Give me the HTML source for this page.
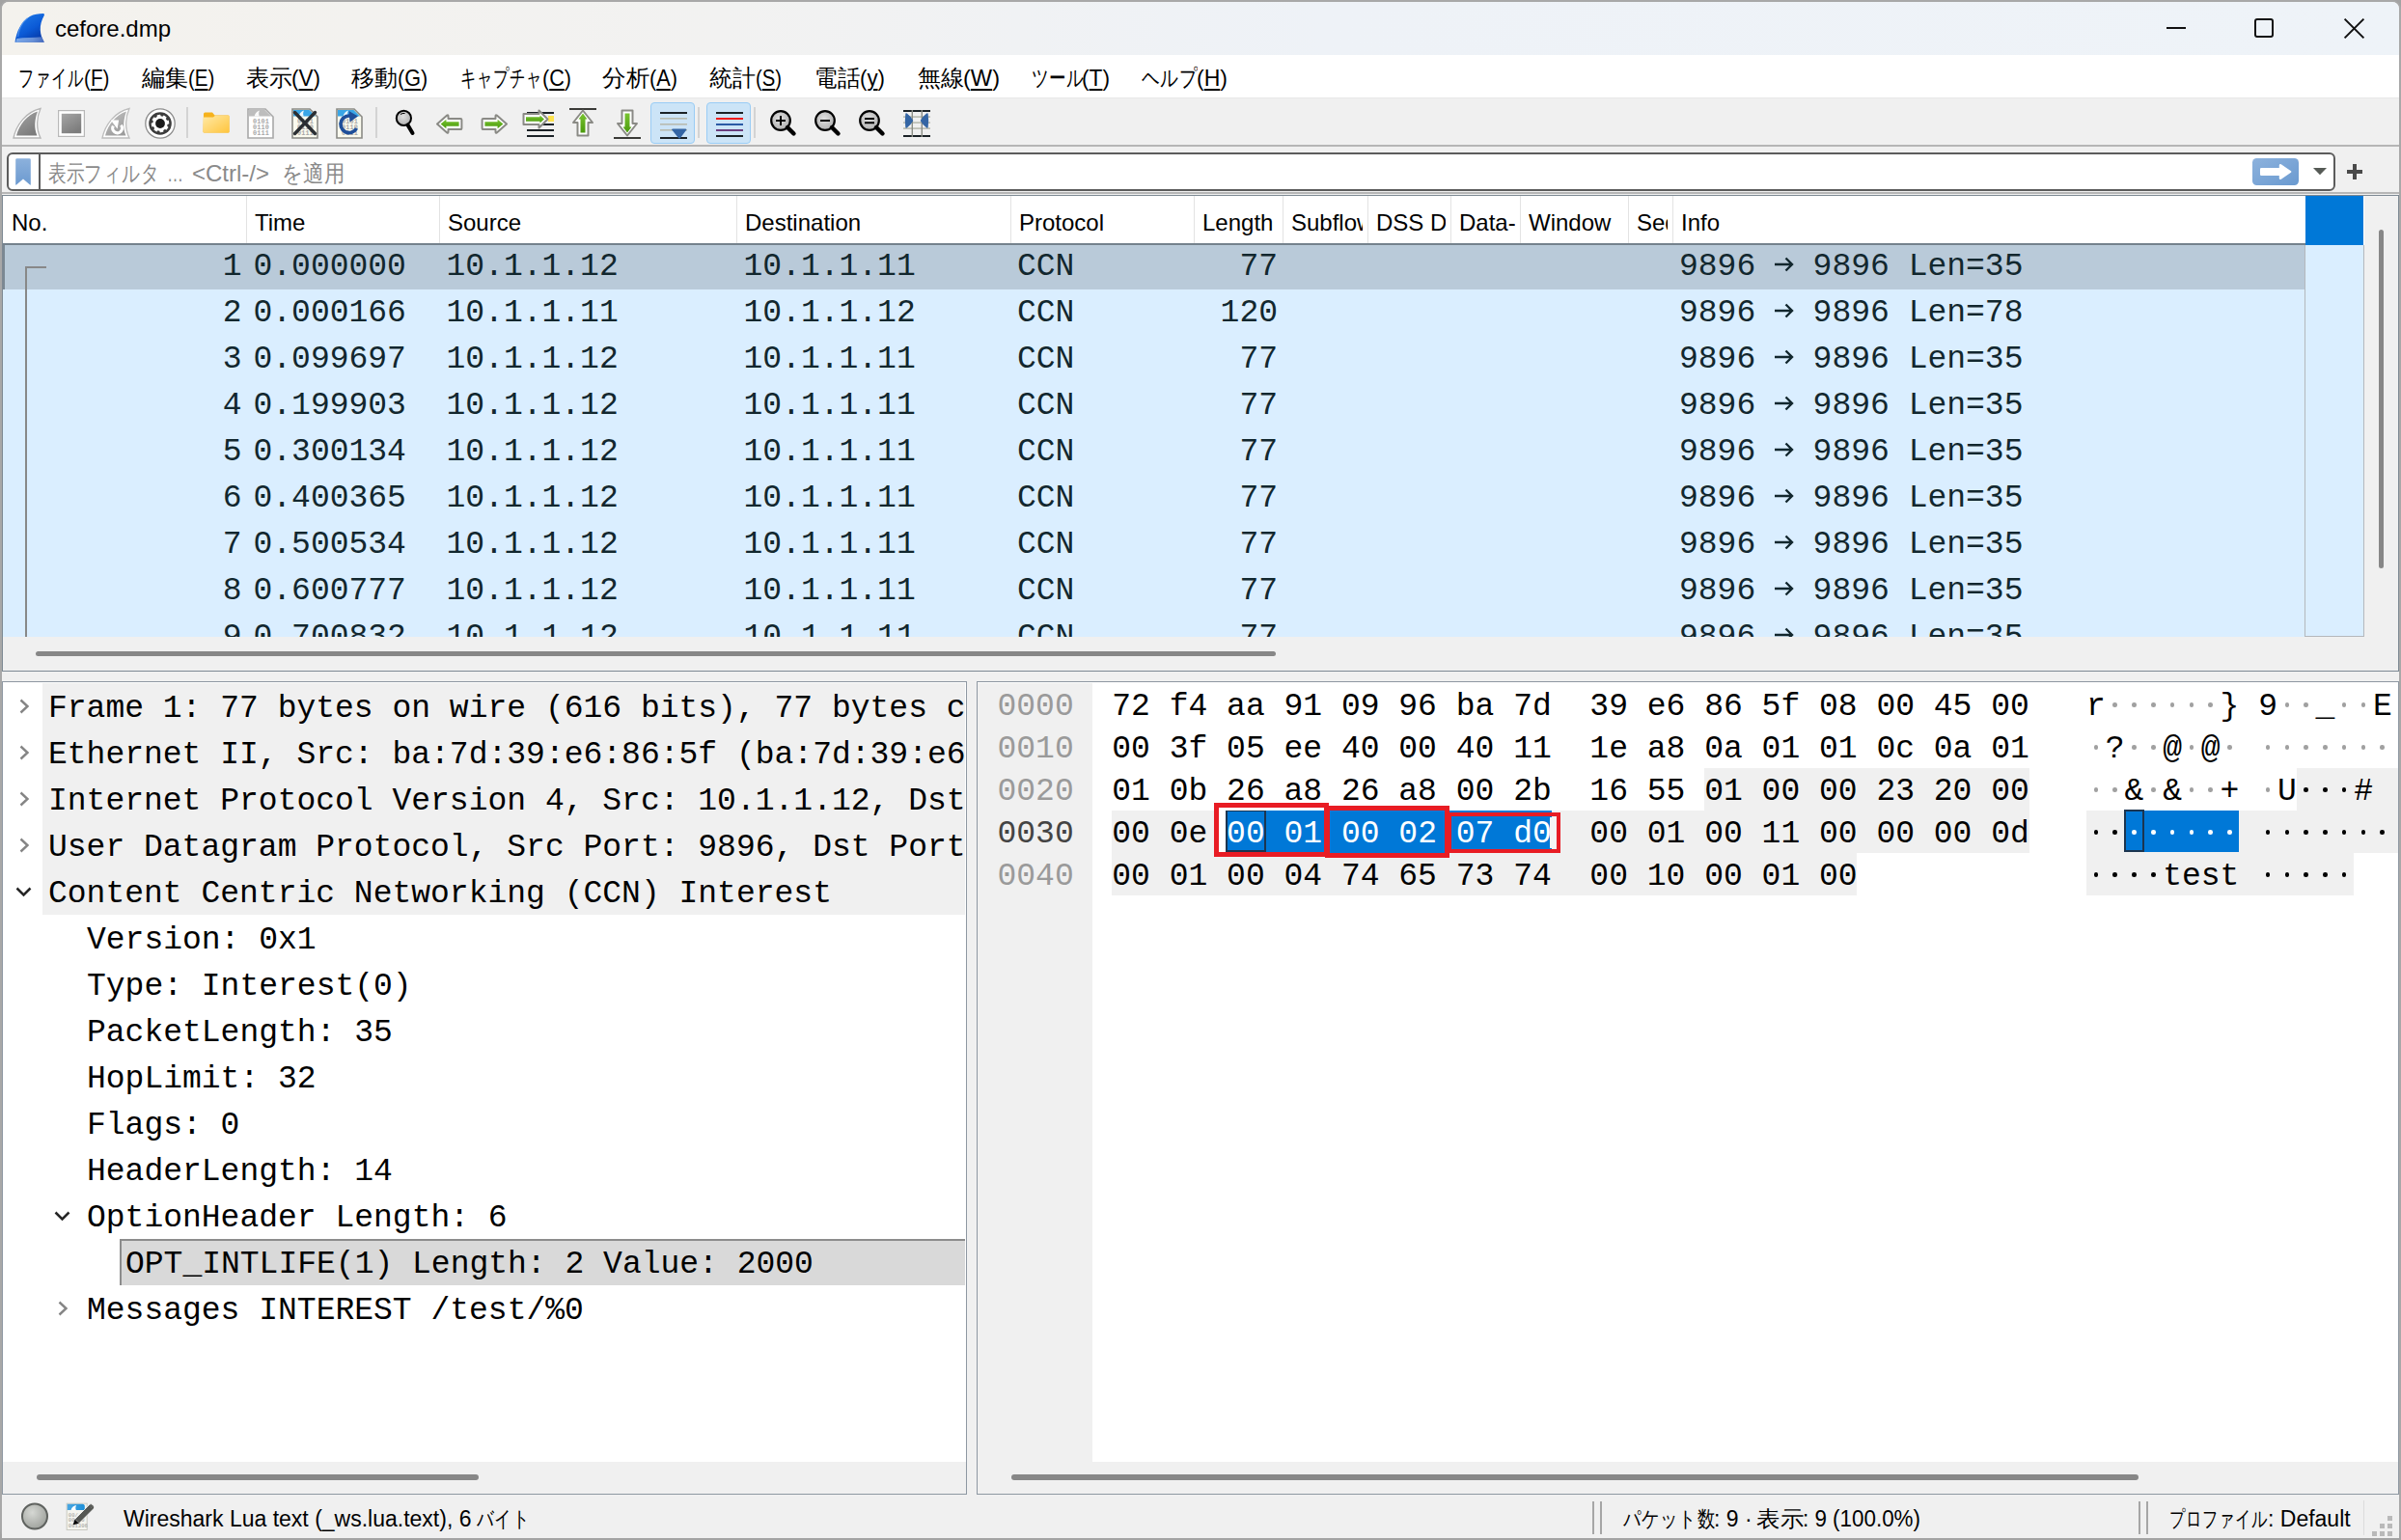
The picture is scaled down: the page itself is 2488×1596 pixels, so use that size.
<!DOCTYPE html><html><head><meta charset="utf-8"><title>cefore.dmp</title><style>
*{margin:0;padding:0;box-sizing:border-box}
html,body{width:2488px;height:1596px;overflow:hidden;background:#a0a0a0;position:relative}
.t{position:absolute;white-space:pre;line-height:1;transform-origin:0 0}
.s24{font-family:"Liberation Sans", sans-serif;font-size:24px;color:#000}
.s23{font-family:"Liberation Sans", sans-serif;font-size:23px;color:#000}
.m{font-family:"Liberation Mono", monospace;font-size:33px;color:#000}
u{text-decoration:underline;text-underline-offset:3px;text-decoration-thickness:1.5px}
svg{position:absolute;overflow:visible}
.clip{position:absolute;overflow:hidden}
</style></head><body><div style="position:absolute;left:0px;top:0px;width:2488px;height:1596px;background:#a3a3a3"></div>
<div style="position:absolute;left:0px;top:0px;width:2488px;height:1594px;background:#f0f0f0;border:2px solid #a8a8a8;border-radius:9px"></div>
<div style="position:absolute;left:2px;top:2px;width:2484px;height:55px;background:linear-gradient(90deg,#f4f2ed 0%,#f2f2f1 30%,#eef2f7 55%,#eef3f8 100%);border-radius:7px 7px 0 0"></div>
<svg style="left:0px;top:0px" width="60" height="60" viewBox="0 0 60 60"><defs><linearGradient id="fin" x1="0.2" y1="0" x2="0.8" y2="1"><stop offset="0" stop-color="#1f7ae8"/><stop offset="0.55" stop-color="#0b5ad6"/><stop offset="1" stop-color="#0434a0"/></linearGradient>
<linearGradient id="wat" x1="0" y1="0" x2="1" y2="0"><stop offset="0" stop-color="#8db6ee"/><stop offset="0.6" stop-color="#7aa0de"/><stop offset="1" stop-color="#4f74c4"/></linearGradient></defs>
<path d="M15.5 43.7 C17 33 22 22 31 17 C35 14.8 40 14 45 14 Q46.6 14.3 45.8 16 C43 21 41.6 26 41.8 31 C42 36 43.5 40 45.8 43.7 Z" fill="url(#fin)"/>
<path d="M18.6 38 C19.6 30 23 23 28.5 18.8" stroke="#5d9cf0" stroke-width="1.1" fill="none" opacity="0.75"/>
<path d="M16.2 43.7 C16.5 42 16.9 40.8 17.3 40 C25 38.6 35 38.9 43.4 38.2 C44.2 40 45 42 45.8 43.7 Z" fill="url(#wat)" opacity="0.85"/></svg>
<div class="t s24" style="left:57px;top:18px;">cefore.dmp</div>
<div style="position:absolute;left:2245px;top:28px;width:20px;height:2px;background:#111"></div>
<div style="position:absolute;left:2336px;top:19px;width:20px;height:20px;border:2px solid #111;border-radius:3px"></div>
<svg style="left:2429px;top:19px" width="21" height="21" viewBox="0 0 21 21"><path d="M0.6 0.6 L20.4 20.4 M20.4 0.6 L0.6 20.4" stroke="#111" stroke-width="2"/></svg>
<div style="position:absolute;left:2px;top:57px;width:2484px;height:44px;background:#ffffff"></div>
<div style="position:absolute;left:2px;top:101px;width:2484px;height:1px;background:#e8e8e8"></div>
<div class="t s24 fit" style="left:19.3px;top:69px;;--tw:67.6;">ファイル</div>
<div class="t s24 fit" style="left:86.8px;top:69px;;--tw:26.4;">(<u>F</u>)</div>
<div class="t s24 fit" style="left:146.7px;top:69px;;--tw:48;">編集</div>
<div class="t s24 fit" style="left:194.5px;top:69px;;--tw:27.4;">(<u>E</u>)</div>
<div class="t s24 fit" style="left:254.5px;top:69px;;--tw:48;">表示</div>
<div class="t s24 fit" style="left:301.5px;top:69px;;--tw:30.0;">(<u>V</u>)</div>
<div class="t s24 fit" style="left:364.1px;top:69px;;--tw:48;">移動</div>
<div class="t s24 fit" style="left:411.8px;top:69px;;--tw:31.2;">(<u>G</u>)</div>
<div class="t s24 fit" style="left:477px;top:69px;;--tw:85;">キャプチャ</div>
<div class="t s24 fit" style="left:562px;top:69px;;--tw:30;">(<u>C</u>)</div>
<div class="t s24 fit" style="left:624px;top:69px;;--tw:49;">分析</div>
<div class="t s24 fit" style="left:673px;top:69px;;--tw:29;">(<u>A</u>)</div>
<div class="t s24 fit" style="left:735px;top:69px;;--tw:48;">統計</div>
<div class="t s24 fit" style="left:783px;top:69px;;--tw:27;">(<u>S</u>)</div>
<div class="t s24 fit" style="left:844px;top:69px;;--tw:47;">電話</div>
<div class="t s24 fit" style="left:891px;top:69px;;--tw:26;">(<u>y</u>)</div>
<div class="t s24 fit" style="left:951px;top:69px;;--tw:48;">無線</div>
<div class="t s24 fit" style="left:998px;top:69px;;--tw:38;">(<u>W</u>)</div>
<div class="t s24 fit" style="left:1068.6px;top:69px;;--tw:54;">ツール</div>
<div class="t s24 fit" style="left:1121px;top:69px;;--tw:29;">(<u>T</u>)</div>
<div class="t s24 fit" style="left:1183px;top:69px;;--tw:58;">ヘルプ</div>
<div class="t s24 fit" style="left:1240px;top:69px;;--tw:32;">(<u>H</u>)</div>
<div style="position:absolute;left:2px;top:102px;width:2484px;height:48px;background:#f0f0f0"></div>
<div style="position:absolute;left:2px;top:150px;width:2484px;height:2px;background:#b5b5b5"></div>
<svg width="0" height="0" style="position:absolute"><defs>
<linearGradient id="gfin" x1="0" y1="0" x2="0.6" y2="1"><stop offset="0" stop-color="#a6a6a6"/><stop offset="1" stop-color="#7c7c7c"/></linearGradient>
<linearGradient id="gfin2" x1="0" y1="0" x2="0.6" y2="1"><stop offset="0" stop-color="#c4c4c4"/><stop offset="1" stop-color="#9c9c9c"/></linearGradient>
<radialGradient id="lens" cx="0.45" cy="0.4" r="0.6"><stop offset="0" stop-color="#e0e0e0"/><stop offset="1" stop-color="#b0b0b0"/></radialGradient>
<linearGradient id="grn" x1="0" y1="0" x2="0" y2="1"><stop offset="0" stop-color="#79c431"/><stop offset="1" stop-color="#4a9a0c"/></linearGradient>
<linearGradient id="fold" x1="0" y1="0" x2="1" y2="1"><stop offset="0" stop-color="#ffe9a6"/><stop offset="1" stop-color="#ffc53d"/></linearGradient>
</defs></svg>
<svg style="left:12px;top:111px" width="32" height="34" viewBox="0 0 32 34"><path d="M2 32 C5 18 15 5 30 1.5 C26 10 25 22 30 32 Z" fill="#fff" stroke="#b5b5b5" stroke-width="1.3"/><path d="M5 29.5 C8 18 16 8 27 4.5 C24 12 23 22 26.5 29.5 Z" fill="url(#gfin)"/></svg>
<svg style="left:60px;top:114px" width="28" height="28" viewBox="0 0 28 28"><rect x="0.6" y="0.6" width="26.8" height="26.8" fill="#fff" stroke="#b8b8b8" stroke-width="1.2"/><rect x="3.8" y="3.8" width="20.4" height="20.4" fill="url(#gfin)"/></svg>
<svg style="left:104px;top:111px" width="32" height="34" viewBox="0 0 32 34"><path d="M2 32 C5 18 15 5 30 1.5 C26 10 25 22 30 32 Z" fill="#fff" stroke="#bdbdbd" stroke-width="1.3"/><path d="M5 29.5 C8 18 16 8 27 4.5 C24 12 23 22 26.5 29.5 Z" fill="url(#gfin2)"/><path d="M21.35 18.75 A4.9 4.9 0 1 1 13.36 19.45" fill="none" stroke="#fff" stroke-width="3.2"/><path d="M10.8 13.6 L19.1 13.6 L17.6 22.5 Z" fill="#fff"/></svg>
<svg style="left:150px;top:112px" width="32" height="32" viewBox="0 0 32 32"><circle cx="16" cy="16" r="15.2" fill="#fff" stroke="#8d8d8d" stroke-width="1.3"/><circle cx="16" cy="16" r="11.8" fill="#3c3c3c"/><circle cx="16" cy="16" r="7.7" fill="#fff"/><rect x="14.1" y="6.8" width="3.8" height="3" rx="0.6" fill="#fff" transform="rotate(-10 16 16)"/><rect x="14.1" y="6.8" width="3.8" height="3" rx="0.6" fill="#fff" transform="rotate(35 16 16)"/><rect x="14.1" y="6.8" width="3.8" height="3" rx="0.6" fill="#fff" transform="rotate(80 16 16)"/><rect x="14.1" y="6.8" width="3.8" height="3" rx="0.6" fill="#fff" transform="rotate(125 16 16)"/><rect x="14.1" y="6.8" width="3.8" height="3" rx="0.6" fill="#fff" transform="rotate(170 16 16)"/><rect x="14.1" y="6.8" width="3.8" height="3" rx="0.6" fill="#fff" transform="rotate(215 16 16)"/><rect x="14.1" y="6.8" width="3.8" height="3" rx="0.6" fill="#fff" transform="rotate(260 16 16)"/><rect x="14.1" y="6.8" width="3.8" height="3" rx="0.6" fill="#fff" transform="rotate(305 16 16)"/><circle cx="16" cy="16" r="4.9" fill="#1a1a1a"/></svg>
<div style="position:absolute;left:193px;top:111px;width:2px;height:32px;background:#d3d3d3"></div>
<svg style="left:210px;top:116px" width="28" height="22" viewBox="0 0 28 22"><path d="M1 2 Q1 0.5 2.5 0.5 L10 0.5 L12.5 3.5 L26.5 3.5 Q27.5 3.5 27.5 4.5 L27.5 20.5 Q27.5 21.5 26.5 21.5 L1.5 21.5 Q0.5 21.5 0.5 20.5 Z" fill="#f6b21c"/><path d="M0.5 6.5 Q0.5 5.5 1.5 5.5 L11 5.5 L13 3.8 L26.5 3.8 Q27.5 3.8 27.5 4.8 L27.5 20.5 Q27.5 21.5 26.5 21.5 L1.5 21.5 Q0.5 21.5 0.5 20.5 Z" fill="url(#fold)"/></svg>
<svg style="left:256px;top:112px" width="28" height="32" viewBox="0 0 28 32"><path d="M1 1 L19 1 L27 9 L27 31 L1 31 Z" fill="#fff" stroke="#a9a9a9" stroke-width="1.6"/><path d="M2 2 L18.5 2 L25 8.5 L2 8.5 Z" fill="#bdbdbd"/><path d="M7.5 8.5 C8.5 5.5 10.5 3.3 13 2.6 C12 4.8 11.8 6.5 12.8 8.5 Z" fill="#fff" opacity="0.9"/><g font-family="Liberation Mono" font-size="6.8" font-weight="bold" fill="#a8a8a8" letter-spacing="0.2"><text x="6" y="16.4">0101</text><text x="6" y="22.3">0110</text><text x="6" y="28.2">0111</text></g></svg>
<svg style="left:302px;top:112px" width="28" height="32" viewBox="0 0 28 32"><path d="M1 1 L19 1 L27 9 L27 31 L1 31 Z" fill="#fbfbef" stroke="#8a8a85" stroke-width="1.6"/><path d="M2 2 L18.5 2 L25 8.5 L2 8.5 Z" fill="#3aa6e6"/><path d="M7.5 8.5 C8.5 5.5 10.5 3.3 13 2.6 C12 4.8 11.8 6.5 12.8 8.5 Z" fill="#fff" opacity="0.9"/><g font-family="Liberation Mono" font-size="6.8" font-weight="bold" fill="#a8a8a8" letter-spacing="0.2"><text x="6" y="16.4">0101</text><text x="6" y="22.3">0110</text><text x="6" y="28.2">0111</text></g><path d="M3.5 4.5 L24.5 26.5 M24.5 4.5 L3.5 26.5" stroke="#2b2f33" stroke-width="3.4" stroke-linecap="round"/></svg>
<svg style="left:348px;top:112px" width="28" height="32" viewBox="0 0 28 32"><path d="M1 1 L19 1 L27 9 L27 31 L1 31 Z" fill="#fbfbef" stroke="#8a8a85" stroke-width="1.6"/><path d="M2 2 L18.5 2 L25 8.5 L2 8.5 Z" fill="#3aa6e6"/><path d="M7.5 8.5 C8.5 5.5 10.5 3.3 13 2.6 C12 4.8 11.8 6.5 12.8 8.5 Z" fill="#fff" opacity="0.9"/><g font-family="Liberation Mono" font-size="6.8" font-weight="bold" fill="#a8a8a8" letter-spacing="0.2"><text x="6" y="16.4">0101</text><text x="6" y="22.3">0110</text><text x="6" y="28.2">0111</text></g><path d="M21.5 21 A8.8 8.8 0 1 1 17.5 8.8" fill="none" stroke="#1f4f9a" stroke-width="3.6"/><path d="M13.5 3 L23 8.5 L14.5 14.5 Z" fill="#1f4f9a"/></svg>
<div style="position:absolute;left:389px;top:111px;width:2px;height:32px;background:#d3d3d3"></div>
<svg style="left:404px;top:112px" width="28" height="30" viewBox="0 0 28 30"><circle cx="14.4" cy="10.4" r="7.6" fill="url(#lens)" stroke="#000" stroke-width="2"/><path d="M11 6.5 Q13 5 15.5 5.5" stroke="#000" stroke-width="1" fill="none"/><path d="M18.5 17.5 L23.5 26" stroke="#000" stroke-width="4" stroke-linecap="round"/></svg>
<svg style="left:451px;top:117px" width="30" height="23" viewBox="0 0 30 23"><path d="M2 11.5 L12.2 2.6 Q13.5 1.6 13.5 3.4 L13.5 5.9 L26.2 5.9 Q27.4 5.9 27.4 7.1 L27.4 15.9 Q27.4 17.1 26.2 17.1 L13.5 17.1 L13.5 19.6 Q13.5 21.4 12.2 20.4 Z" fill="#fff" stroke="#8a8a85" stroke-width="2" stroke-linejoin="round"/><path d="M5.6 11.5 L11.4 6.8 L11.4 9.2 L24.6 9.2 L24.6 13.8 L11.4 13.8 L11.4 16.2 Z" fill="url(#grn)"/></svg>
<svg style="left:497px;top:117px" width="30" height="23" viewBox="0 0 30 23"><path d="M28 11.5 L17.8 2.6 Q16.5 1.6 16.5 3.4 L16.5 5.9 L3.8 5.9 Q2.6 5.9 2.6 7.1 L2.6 15.9 Q2.6 17.1 3.8 17.1 L16.5 17.1 L16.5 19.6 Q16.5 21.4 17.8 20.4 Z" fill="#fff" stroke="#8a8a85" stroke-width="2" stroke-linejoin="round"/><path d="M24.4 11.5 L18.6 6.8 L18.6 9.2 L5.4 9.2 L5.4 13.8 L18.6 13.8 L18.6 16.2 Z" fill="url(#grn)"/></svg>
<svg style="left:541px;top:113px" width="36" height="30" viewBox="0 0 36 30"><rect x="5" y="3" width="28" height="2" fill="#1b2226"/><rect x="27" y="7" width="6" height="6" fill="#fde34d"/><rect x="5" y="15" width="28" height="2" fill="#1b2226"/><rect x="5" y="21" width="28" height="2" fill="#1b2226"/><rect x="5" y="27" width="28" height="2" fill="#1b2226"/><path d="M26.5 10.5 L17.5 1.5 L17.5 5 L1.5 5 L1.5 16 L17.5 16 L17.5 19.5 Z" fill="#fff" stroke="#8a8a85" stroke-width="2" stroke-linejoin="round"/><path d="M23 10.5 L18.5 6.5 L18.5 8.2 L4 8.2 L4 12.8 L18.5 12.8 L18.5 14.5 Z" fill="url(#grn)"/></svg>
<svg style="left:589px;top:111px" width="30" height="34" viewBox="0 0 30 34"><rect x="1" y="1" width="28" height="2" fill="#3a3a37"/><path d="M15 3.5 L25 16 L20.5 16 L20.5 29.5 L9.5 29.5 L9.5 16 L5 16 Z" fill="#fff" stroke="#8a8a85" stroke-width="2" stroke-linejoin="round"/><path d="M15 6.5 L19.5 12.5 L17.5 12.5 L17.5 26.5 L12.5 26.5 L12.5 12.5 L10.5 12.5 Z" fill="url(#grn)"/></svg>
<svg style="left:635px;top:112px" width="30" height="34" viewBox="0 0 30 34"><rect x="1" y="30" width="28" height="2" fill="#3a3a37"/><path d="M15 28.5 L25 16 L20.5 16 L20.5 2.5 L9.5 2.5 L9.5 16 L5 16 Z" fill="#fff" stroke="#8a8a85" stroke-width="2" stroke-linejoin="round"/><path d="M15 25.5 L19.5 19.5 L17.5 19.5 L17.5 5.5 L12.5 5.5 L12.5 19.5 L10.5 19.5 Z" fill="url(#grn)"/></svg>
<div style="position:absolute;left:674px;top:106px;width:46px;height:43px;background:#cce4f7;border:1px solid #99ccf5;border-radius:4px"></div>
<svg style="left:684px;top:115px" width="28" height="30" viewBox="0 0 28 30"><rect x="0" y="1" width="28" height="2" fill="#1b2226"/><rect x="0" y="7" width="28" height="1.6" fill="#b8bbb0"/><rect x="0" y="13" width="28" height="1.6" fill="#b8bbb0"/><rect x="0" y="19" width="28" height="1.6" fill="#b8bbb0"/><rect x="0" y="27" width="28" height="2" fill="#1b2226"/><path d="M12 19.5 Q12 18.5 13.5 18.5 L26.5 18.5 Q28 18.5 27 20 L21 28 Q20 29 19 28 L13 20.5 Z" fill="#3465a4"/></svg>
<div style="position:absolute;left:723px;top:111px;width:2px;height:32px;background:#d3d3d3"></div>
<div style="position:absolute;left:732px;top:106px;width:46px;height:43px;background:#cce4f7;border:1px solid #99ccf5;border-radius:4px"></div>
<svg style="left:742px;top:115px" width="28" height="30" viewBox="0 0 28 30"><rect x="0" y="1" width="28" height="2" fill="#1b2226"/><rect x="0" y="7" width="28" height="2" fill="#ef1c1c"/><rect x="0" y="13" width="28" height="2" fill="#2a5aa5"/><rect x="0" y="19" width="28" height="2" fill="#6a3d7d"/><rect x="0" y="25" width="28" height="2" fill="#1b2226"/></svg>
<div style="position:absolute;left:781px;top:111px;width:2px;height:32px;background:#d3d3d3"></div>
<svg style="left:798px;top:114px" width="30" height="30" viewBox="0 0 30 30"><circle cx="11" cy="11" r="9.8" fill="url(#lens)" stroke="#000" stroke-width="2.2"/><path d="M18 18 L24.5 24.5" stroke="#000" stroke-width="4.4" stroke-linecap="round"/><path d="M6 11 L16 11 M11 6 L11 16" stroke="#000" stroke-width="2"/></svg>
<svg style="left:844px;top:114px" width="30" height="30" viewBox="0 0 30 30"><circle cx="11" cy="11" r="9.8" fill="url(#lens)" stroke="#000" stroke-width="2.2"/><path d="M18 18 L24.5 24.5" stroke="#000" stroke-width="4.4" stroke-linecap="round"/><path d="M6 11 L16 11" stroke="#000" stroke-width="2"/></svg>
<svg style="left:890px;top:114px" width="30" height="30" viewBox="0 0 30 30"><circle cx="11" cy="11" r="9.8" fill="url(#lens)" stroke="#000" stroke-width="2.2"/><path d="M18 18 L24.5 24.5" stroke="#000" stroke-width="4.4" stroke-linecap="round"/><path d="M6 9 L16 9 M6 13.2 L16 13.2" stroke="#000" stroke-width="1.9"/></svg>
<svg style="left:936px;top:113px" width="28" height="30" viewBox="0 0 28 30"><rect x="0" y="1" width="28" height="2" fill="#1b2226"/><rect x="0" y="7.3" width="28" height="1.6" fill="#b8bbb0"/><rect x="0" y="13.3" width="28" height="1.6" fill="#b8bbb0"/><rect x="0" y="19.3" width="28" height="1.6" fill="#b8bbb0"/><rect x="0" y="27" width="28" height="2" fill="#1b2226"/><rect x="8.6" y="1" width="1.4" height="28" fill="#8a8d86"/><rect x="18.6" y="1" width="1.4" height="28" fill="#8a8d86"/><path d="M2.3 5.2 Q2.4 3.6 3.8 4.5 Q8 7.6 10.3 12 Q8 16.4 3.8 19.5 Q2.4 20.4 2.3 18.8 Q1.4 12 2.3 5.2 Z" fill="#3465a4"/><path d="M25.7 5.2 Q25.6 3.6 24.2 4.5 Q20 7.6 17.7 12 Q20 16.4 24.2 19.5 Q25.6 20.4 25.7 18.8 Q26.6 12 25.7 5.2 Z" fill="#3465a4"/></svg>
<div style="position:absolute;left:2px;top:152px;width:2484px;height:47px;background:#f0f0f0"></div>
<div style="position:absolute;left:7px;top:158px;width:2413px;height:40px;background:#fff;border:2px solid #5c5c5c;border-radius:6px"></div>
<div style="position:absolute;left:40px;top:160px;width:2px;height:36px;background:#5c5c5c"></div>
<svg style="left:14px;top:162px" width="20" height="32" viewBox="0 0 20 32"><defs><linearGradient id="bm" x1="0" y1="0" x2="0" y2="1"><stop offset="0" stop-color="#8cb1dc"/><stop offset="1" stop-color="#6c9ad0"/></linearGradient></defs>
<path d="M2.2 3.5 Q2.2 2.2 3.6 2.2 L16.4 2.2 Q17.8 2.2 17.8 3.5 L17.8 29.2 Q17.8 30 17 29.4 L10 23.5 L3 29.4 Q2.2 30 2.2 29.2 Z" fill="url(#bm)"/></svg>
<div class="t s24 fit" style="left:50px;top:168px;color:#8a8a8a;--tw:115;">表示フィルタ</div>
<div class="t s24 fit" style="left:173px;top:168px;color:#8a8a8a;--tw:17;">…</div>
<div class="t s24" style="left:199px;top:168px;color:#8a8a8a">&lt;Ctrl-/&gt;</div>
<div class="t s24 fit" style="left:292px;top:168px;color:#8a8a8a;--tw:65;">を適用</div>
<svg style="left:2334px;top:164px" width="48" height="28" viewBox="0 0 48 28"><defs><linearGradient id="ap" x1="0" y1="0" x2="1" y2="1"><stop offset="0" stop-color="#8db2dd"/><stop offset="1" stop-color="#6a9ad0"/></linearGradient></defs>
<rect x="0" y="0" width="48" height="28" rx="4.5" fill="url(#ap)"/>
<path d="M9.2 10 L27.8 10 L27.8 7 Q28.3 5.3 29.8 6.2 L40 13.2 Q41 14 40 14.8 L29.8 21.8 Q28.3 22.7 27.8 21 L27.8 18 L9.2 18 Q8 18 8 16.8 L8 11.2 Q8 10 9.2 10 Z" fill="#fff"/></svg>
<svg style="left:2397px;top:174px" width="14" height="8" viewBox="0 0 14 8"><path d="M0 0 L14 0 L7 7.3 Z" fill="#555a55"/></svg>
<div style="position:absolute;left:2432px;top:176px;width:16px;height:4px;background:#4a4a4a"></div>
<div style="position:absolute;left:2438px;top:170px;width:4px;height:16px;background:#4a4a4a"></div>
<div style="position:absolute;left:2px;top:199px;width:2484px;height:2px;background:#b6b6b6"></div>
<div style="position:absolute;left:2px;top:201px;width:2484px;height:1px;background:#f0f0f0"></div>
<div style="position:absolute;left:2px;top:202px;width:2484px;height:494px;background:#fff;border:1px solid #7d8993"></div>
<div class="clip" style="left:12px;top:203px;width:238px;height:49px"><div class="t s24" style="left:0;top:16px">No.</div></div>
<div style="position:absolute;left:255px;top:203px;width:1px;height:49px;background:#e3e3e3"></div>
<div class="clip" style="left:264px;top:203px;width:186px;height:49px"><div class="t s24" style="left:0;top:16px">Time</div></div>
<div style="position:absolute;left:455px;top:203px;width:1px;height:49px;background:#e3e3e3"></div>
<div class="clip" style="left:464px;top:203px;width:294px;height:49px"><div class="t s24" style="left:0;top:16px">Source</div></div>
<div style="position:absolute;left:763px;top:203px;width:1px;height:49px;background:#e3e3e3"></div>
<div class="clip" style="left:772px;top:203px;width:270px;height:49px"><div class="t s24" style="left:0;top:16px">Destination</div></div>
<div style="position:absolute;left:1047px;top:203px;width:1px;height:49px;background:#e3e3e3"></div>
<div class="clip" style="left:1056px;top:203px;width:176px;height:49px"><div class="t s24" style="left:0;top:16px">Protocol</div></div>
<div style="position:absolute;left:1237px;top:203px;width:1px;height:49px;background:#e3e3e3"></div>
<div class="clip" style="left:1246px;top:203px;width:78px;height:49px"><div class="t s24" style="left:0;top:16px">Length</div></div>
<div style="position:absolute;left:1329px;top:203px;width:1px;height:49px;background:#e3e3e3"></div>
<div class="clip" style="left:1338px;top:203px;width:74px;height:49px"><div class="t s24" style="left:0;top:16px">Subflow</div></div>
<div style="position:absolute;left:1417px;top:203px;width:1px;height:49px;background:#e3e3e3"></div>
<div class="clip" style="left:1426px;top:203px;width:72px;height:49px"><div class="t s24" style="left:0;top:16px">DSS Data</div></div>
<div style="position:absolute;left:1503px;top:203px;width:1px;height:49px;background:#e3e3e3"></div>
<div class="clip" style="left:1512px;top:203px;width:58px;height:49px"><div class="t s24" style="left:0;top:16px">Data-ACK</div></div>
<div style="position:absolute;left:1575px;top:203px;width:1px;height:49px;background:#e3e3e3"></div>
<div class="clip" style="left:1584px;top:203px;width:98px;height:49px"><div class="t s24" style="left:0;top:16px">Window</div></div>
<div style="position:absolute;left:1687px;top:203px;width:1px;height:49px;background:#e3e3e3"></div>
<div class="clip" style="left:1696px;top:203px;width:32px;height:49px"><div class="t s24" style="left:0;top:16px">Sequence</div></div>
<div style="position:absolute;left:1733px;top:203px;width:1px;height:49px;background:#e3e3e3"></div>
<div class="clip" style="left:1742px;top:203px;width:642px;height:49px"><div class="t s24" style="left:0;top:16px">Info</div></div>
<div style="position:absolute;left:2389px;top:203px;width:60px;height:51px;background:#0078d7"></div>
<div style="position:absolute;left:3px;top:252px;width:2386px;height:408px;background:#daeeff"></div>
<div style="position:absolute;left:3px;top:252px;width:2386px;height:48px;background:#b9cad9"></div>
<div style="position:absolute;left:3px;top:252px;width:2386px;height:2px;background:#75828d"></div>
<div style="position:absolute;left:3px;top:254px;width:2px;height:46px;background:#7b8893"></div>
<div style="position:absolute;left:26px;top:276px;width:22px;height:2px;background:#888"></div>
<div style="position:absolute;left:26px;top:276px;width:2px;height:384px;background:#888"></div>
<div class="clip" style="left:3px;top:254px;width:2385px;height:406px">
<div class="t m" style="right:2137.5px;top:6px;color:#12272e">1</div>
<div class="t m" style="left:259.5px;top:6px;color:#12272e">0.000000</div>
<div class="t m" style="left:459.5px;top:6px;color:#12272e">10.1.1.12</div>
<div class="t m" style="left:767.5px;top:6px;color:#12272e">10.1.1.11</div>
<div class="t m" style="left:1051px;top:6px;color:#12272e">CCN</div>
<div class="t m" style="right:1064px;top:6px;color:#12272e">77</div>
<div class="t m" style="left:1737px;top:6px;color:#12272e">9896   9896 Len=35</div>
<svg style="left:1835px;top:12px" width="21" height="16" viewBox="0 0 21 16"><path d="M1 8 L19 8 M12.5 1.5 L19 8 L12.5 14.5" fill="none" stroke="#12272e" stroke-width="2.4"/></svg>
<div class="t m" style="right:2137.5px;top:54px;color:#12272e">2</div>
<div class="t m" style="left:259.5px;top:54px;color:#12272e">0.000166</div>
<div class="t m" style="left:459.5px;top:54px;color:#12272e">10.1.1.11</div>
<div class="t m" style="left:767.5px;top:54px;color:#12272e">10.1.1.12</div>
<div class="t m" style="left:1051px;top:54px;color:#12272e">CCN</div>
<div class="t m" style="right:1064px;top:54px;color:#12272e">120</div>
<div class="t m" style="left:1737px;top:54px;color:#12272e">9896   9896 Len=78</div>
<svg style="left:1835px;top:60px" width="21" height="16" viewBox="0 0 21 16"><path d="M1 8 L19 8 M12.5 1.5 L19 8 L12.5 14.5" fill="none" stroke="#12272e" stroke-width="2.4"/></svg>
<div class="t m" style="right:2137.5px;top:102px;color:#12272e">3</div>
<div class="t m" style="left:259.5px;top:102px;color:#12272e">0.099697</div>
<div class="t m" style="left:459.5px;top:102px;color:#12272e">10.1.1.12</div>
<div class="t m" style="left:767.5px;top:102px;color:#12272e">10.1.1.11</div>
<div class="t m" style="left:1051px;top:102px;color:#12272e">CCN</div>
<div class="t m" style="right:1064px;top:102px;color:#12272e">77</div>
<div class="t m" style="left:1737px;top:102px;color:#12272e">9896   9896 Len=35</div>
<svg style="left:1835px;top:108px" width="21" height="16" viewBox="0 0 21 16"><path d="M1 8 L19 8 M12.5 1.5 L19 8 L12.5 14.5" fill="none" stroke="#12272e" stroke-width="2.4"/></svg>
<div class="t m" style="right:2137.5px;top:150px;color:#12272e">4</div>
<div class="t m" style="left:259.5px;top:150px;color:#12272e">0.199903</div>
<div class="t m" style="left:459.5px;top:150px;color:#12272e">10.1.1.12</div>
<div class="t m" style="left:767.5px;top:150px;color:#12272e">10.1.1.11</div>
<div class="t m" style="left:1051px;top:150px;color:#12272e">CCN</div>
<div class="t m" style="right:1064px;top:150px;color:#12272e">77</div>
<div class="t m" style="left:1737px;top:150px;color:#12272e">9896   9896 Len=35</div>
<svg style="left:1835px;top:156px" width="21" height="16" viewBox="0 0 21 16"><path d="M1 8 L19 8 M12.5 1.5 L19 8 L12.5 14.5" fill="none" stroke="#12272e" stroke-width="2.4"/></svg>
<div class="t m" style="right:2137.5px;top:198px;color:#12272e">5</div>
<div class="t m" style="left:259.5px;top:198px;color:#12272e">0.300134</div>
<div class="t m" style="left:459.5px;top:198px;color:#12272e">10.1.1.12</div>
<div class="t m" style="left:767.5px;top:198px;color:#12272e">10.1.1.11</div>
<div class="t m" style="left:1051px;top:198px;color:#12272e">CCN</div>
<div class="t m" style="right:1064px;top:198px;color:#12272e">77</div>
<div class="t m" style="left:1737px;top:198px;color:#12272e">9896   9896 Len=35</div>
<svg style="left:1835px;top:204px" width="21" height="16" viewBox="0 0 21 16"><path d="M1 8 L19 8 M12.5 1.5 L19 8 L12.5 14.5" fill="none" stroke="#12272e" stroke-width="2.4"/></svg>
<div class="t m" style="right:2137.5px;top:246px;color:#12272e">6</div>
<div class="t m" style="left:259.5px;top:246px;color:#12272e">0.400365</div>
<div class="t m" style="left:459.5px;top:246px;color:#12272e">10.1.1.12</div>
<div class="t m" style="left:767.5px;top:246px;color:#12272e">10.1.1.11</div>
<div class="t m" style="left:1051px;top:246px;color:#12272e">CCN</div>
<div class="t m" style="right:1064px;top:246px;color:#12272e">77</div>
<div class="t m" style="left:1737px;top:246px;color:#12272e">9896   9896 Len=35</div>
<svg style="left:1835px;top:252px" width="21" height="16" viewBox="0 0 21 16"><path d="M1 8 L19 8 M12.5 1.5 L19 8 L12.5 14.5" fill="none" stroke="#12272e" stroke-width="2.4"/></svg>
<div class="t m" style="right:2137.5px;top:294px;color:#12272e">7</div>
<div class="t m" style="left:259.5px;top:294px;color:#12272e">0.500534</div>
<div class="t m" style="left:459.5px;top:294px;color:#12272e">10.1.1.12</div>
<div class="t m" style="left:767.5px;top:294px;color:#12272e">10.1.1.11</div>
<div class="t m" style="left:1051px;top:294px;color:#12272e">CCN</div>
<div class="t m" style="right:1064px;top:294px;color:#12272e">77</div>
<div class="t m" style="left:1737px;top:294px;color:#12272e">9896   9896 Len=35</div>
<svg style="left:1835px;top:300px" width="21" height="16" viewBox="0 0 21 16"><path d="M1 8 L19 8 M12.5 1.5 L19 8 L12.5 14.5" fill="none" stroke="#12272e" stroke-width="2.4"/></svg>
<div class="t m" style="right:2137.5px;top:342px;color:#12272e">8</div>
<div class="t m" style="left:259.5px;top:342px;color:#12272e">0.600777</div>
<div class="t m" style="left:459.5px;top:342px;color:#12272e">10.1.1.12</div>
<div class="t m" style="left:767.5px;top:342px;color:#12272e">10.1.1.11</div>
<div class="t m" style="left:1051px;top:342px;color:#12272e">CCN</div>
<div class="t m" style="right:1064px;top:342px;color:#12272e">77</div>
<div class="t m" style="left:1737px;top:342px;color:#12272e">9896   9896 Len=35</div>
<svg style="left:1835px;top:348px" width="21" height="16" viewBox="0 0 21 16"><path d="M1 8 L19 8 M12.5 1.5 L19 8 L12.5 14.5" fill="none" stroke="#12272e" stroke-width="2.4"/></svg>
<div class="t m" style="right:2137.5px;top:390px;color:#12272e">9</div>
<div class="t m" style="left:259.5px;top:390px;color:#12272e">0.700832</div>
<div class="t m" style="left:459.5px;top:390px;color:#12272e">10.1.1.12</div>
<div class="t m" style="left:767.5px;top:390px;color:#12272e">10.1.1.11</div>
<div class="t m" style="left:1051px;top:390px;color:#12272e">CCN</div>
<div class="t m" style="right:1064px;top:390px;color:#12272e">77</div>
<div class="t m" style="left:1737px;top:390px;color:#12272e">9896   9896 Len=35</div>
<svg style="left:1835px;top:396px" width="21" height="16" viewBox="0 0 21 16"><path d="M1 8 L19 8 M12.5 1.5 L19 8 L12.5 14.5" fill="none" stroke="#12272e" stroke-width="2.4"/></svg>
</div>
<div style="position:absolute;left:2450px;top:203px;width:35px;height:457px;background:#f0f0f0"></div>
<div style="position:absolute;left:2465px;top:238px;width:5px;height:351px;background:#878787;border-radius:3px"></div>
<div style="position:absolute;left:3px;top:660px;width:2482px;height:35px;background:#f0f0f0"></div>
<div style="position:absolute;left:37px;top:675px;width:1285px;height:5px;background:#878787;border-radius:3px"></div>
<div style="position:absolute;left:2388px;top:254px;width:62px;height:406px;background:#daeeff;border:1px solid #b4b8bc;border-top:none"></div>
<div style="position:absolute;left:2px;top:696px;width:2484px;height:10px;background:#f0f0f0"></div>
<div style="position:absolute;left:2px;top:706px;width:1000px;height:843px;background:#fff;border:1px solid #8e98a2"></div>
<div class="clip" style="left:3px;top:707px;width:997px;height:808px">
<div style="position:absolute;left:41px;top:1px;width:1000px;height:48px;background:#f0f0f0"></div>
<div class="t m" style="left:47px;top:11px">Frame 1: 77 bytes on wire (616 bits), 77 bytes captured (616 bits) on interface</div>
<svg style="left:16.5px;top:17px" width="11" height="16" viewBox="0 0 11 16"><path d="M1.5 1.5 L8.5 8 L1.5 14.5" fill="none" stroke="#858585" stroke-width="2.4"/></svg>
<div style="position:absolute;left:41px;top:49px;width:1000px;height:48px;background:#f0f0f0"></div>
<div class="t m" style="left:47px;top:59px">Ethernet II, Src: ba:7d:39:e6:86:5f (ba:7d:39:e6:86:5f), Dst: 72:f4:aa:91:09:96</div>
<svg style="left:16.5px;top:65px" width="11" height="16" viewBox="0 0 11 16"><path d="M1.5 1.5 L8.5 8 L1.5 14.5" fill="none" stroke="#858585" stroke-width="2.4"/></svg>
<div style="position:absolute;left:41px;top:97px;width:1000px;height:48px;background:#f0f0f0"></div>
<div class="t m" style="left:47px;top:107px">Internet Protocol Version 4, Src: 10.1.1.12, Dst: 10.1.1.11</div>
<svg style="left:16.5px;top:113px" width="11" height="16" viewBox="0 0 11 16"><path d="M1.5 1.5 L8.5 8 L1.5 14.5" fill="none" stroke="#858585" stroke-width="2.4"/></svg>
<div style="position:absolute;left:41px;top:145px;width:1000px;height:48px;background:#f0f0f0"></div>
<div class="t m" style="left:47px;top:155px">User Datagram Protocol, Src Port: 9896, Dst Port: 9896</div>
<svg style="left:16.5px;top:161px" width="11" height="16" viewBox="0 0 11 16"><path d="M1.5 1.5 L8.5 8 L1.5 14.5" fill="none" stroke="#858585" stroke-width="2.4"/></svg>
<div style="position:absolute;left:41px;top:193px;width:1000px;height:48px;background:#f0f0f0"></div>
<div class="t m" style="left:47px;top:203px">Content Centric Networking (CCN) Interest</div>
<svg style="left:13px;top:212px" width="17" height="11" viewBox="0 0 17 11"><path d="M1.5 1.5 L8.5 8.5 L15.5 1.5" fill="none" stroke="#262626" stroke-width="2.5"/></svg>
<div class="t m" style="left:87px;top:251px">Version: 0x1</div>
<div class="t m" style="left:87px;top:299px">Type: Interest(0)</div>
<div class="t m" style="left:87px;top:347px">PacketLength: 35</div>
<div class="t m" style="left:87px;top:395px">HopLimit: 32</div>
<div class="t m" style="left:87px;top:443px">Flags: 0</div>
<div class="t m" style="left:87px;top:491px">HeaderLength: 14</div>
<div class="t m" style="left:87px;top:539px">OptionHeader Length: 6</div>
<svg style="left:53px;top:548px" width="17" height="11" viewBox="0 0 17 11"><path d="M1.5 1.5 L8.5 8.5 L15.5 1.5" fill="none" stroke="#262626" stroke-width="2.5"/></svg>
<div style="position:absolute;left:121px;top:577px;width:1000px;height:48px;background:#d9d9d9;border-left:2px solid #8c8c8c;border-top:2px solid #8c8c8c"></div>
<div class="t m" style="left:127px;top:587px">OPT_INTLIFE(1) Length: 2 Value: 2000</div>
<div class="t m" style="left:87px;top:635px">Messages INTEREST /test/%0</div>
<svg style="left:57px;top:641px" width="11" height="16" viewBox="0 0 11 16"><path d="M1.5 1.5 L8.5 8 L1.5 14.5" fill="none" stroke="#858585" stroke-width="2.4"/></svg>
</div>
<div style="position:absolute;left:3px;top:1515px;width:998px;height:33px;background:#f0f0f0"></div>
<div style="position:absolute;left:38px;top:1528px;width:458px;height:6px;background:#878787;border-radius:3px"></div>
<div style="position:absolute;left:1012px;top:706px;width:1474px;height:843px;background:#fff;border:1px solid #8e98a2"></div>
<div style="position:absolute;left:1013px;top:708px;width:119px;height:807px;background:#f0f0f0"></div>
<div class="clip" style="left:1013px;top:707px;width:1472px;height:808px">
<div style="position:absolute;left:753.0px;top:89px;width:336.5px;height:44px;background:#f0f0f0"></div>
<div style="position:absolute;left:139.3px;top:133px;width:950.3px;height:44px;background:#f0f0f0"></div>
<div style="position:absolute;left:139.3px;top:177px;width:772.1px;height:44px;background:#f0f0f0"></div>
<div style="position:absolute;left:1366.7px;top:89px;width:105.3px;height:44px;background:#f0f0f0"></div>
<div style="position:absolute;left:1148.9px;top:133px;width:323.1px;height:44px;background:#f0f0f0"></div>
<div style="position:absolute;left:1148.9px;top:177px;width:277.2px;height:44px;background:#f0f0f0"></div>
<div style="position:absolute;left:258.1px;top:133px;width:336.5px;height:44px;background:#0078d7"></div>
<div style="position:absolute;left:1188.5px;top:133px;width:118.8px;height:43px;background:#0078d7"></div>
<div style="position:absolute;left:257.1px;top:132px;width:41.6px;height:44px;border:2px solid #1c3550"></div>
<div style="position:absolute;left:1187.5px;top:132px;width:21.8px;height:44px;border:2px solid #1c3550"></div>
<div class="t m" style="left:20.5px;top:9px;color:#9a9a9a">0000</div>
<div class="t m" style="left:139.28px;top:9px">72 f4 aa 91 09 96 ba 7d  39 e6 86 5f 08 00 45 00</div>
<div class="t m" style="left:1148.93px;top:9px">r      } 9  _  E </div>
<div class="t m" style="left:20.5px;top:53px;color:#9a9a9a">0010</div>
<div class="t m" style="left:139.28px;top:53px">00 3f 05 ee 40 00 40 11  1e a8 0a 01 01 0c 0a 01</div>
<div class="t m" style="left:1148.93px;top:53px"> ?  @ @          </div>
<div class="t m" style="left:20.5px;top:97px;color:#9a9a9a">0020</div>
<div class="t m" style="left:139.28px;top:97px">01 0b 26 a8 26 a8 00 2b  16 55 01 00 00 23 20 00</div>
<div class="t m" style="left:1148.93px;top:97px">  &amp; &amp;  +  U   #  </div>
<div class="t m" style="left:20.5px;top:141px;color:#444">0030</div>
<div class="t m" style="left:139.28px;top:141px">00 0e <span style="color:#fff">00 01 00 02 07 d0</span>  00 01 00 11 00 00 00 0d</div>
<div class="t m" style="left:1148.93px;top:141px">                 </div>
<div class="t m" style="left:20.5px;top:185px;color:#9a9a9a">0040</div>
<div class="t m" style="left:139.28px;top:185px">00 01 00 04 74 65 73 74  00 10 00 01 00</div>
<div class="t m" style="left:1148.93px;top:185px">    test      </div>
<div style="position:absolute;left:1176.33px;top:21.10px;width:4.6px;height:4.6px;border-radius:50%;background:#a0a0a0"></div><div style="position:absolute;left:1196.12px;top:21.10px;width:4.6px;height:4.6px;border-radius:50%;background:#a0a0a0"></div><div style="position:absolute;left:1215.92px;top:21.10px;width:4.6px;height:4.6px;border-radius:50%;background:#a0a0a0"></div><div style="position:absolute;left:1235.72px;top:21.10px;width:4.6px;height:4.6px;border-radius:50%;background:#a0a0a0"></div><div style="position:absolute;left:1255.51px;top:21.10px;width:4.6px;height:4.6px;border-radius:50%;background:#a0a0a0"></div><div style="position:absolute;left:1275.31px;top:21.10px;width:4.6px;height:4.6px;border-radius:50%;background:#a0a0a0"></div><div style="position:absolute;left:1354.50px;top:21.10px;width:4.6px;height:4.6px;border-radius:50%;background:#a0a0a0"></div><div style="position:absolute;left:1374.30px;top:21.10px;width:4.6px;height:4.6px;border-radius:50%;background:#a0a0a0"></div><div style="position:absolute;left:1413.89px;top:21.10px;width:4.6px;height:4.6px;border-radius:50%;background:#a0a0a0"></div><div style="position:absolute;left:1433.69px;top:21.10px;width:4.6px;height:4.6px;border-radius:50%;background:#a0a0a0"></div><div style="position:absolute;left:1473.28px;top:21.10px;width:4.6px;height:4.6px;border-radius:50%;background:#a0a0a0"></div><div style="position:absolute;left:1156.53px;top:65.10px;width:4.6px;height:4.6px;border-radius:50%;background:#a0a0a0"></div><div style="position:absolute;left:1196.12px;top:65.10px;width:4.6px;height:4.6px;border-radius:50%;background:#a0a0a0"></div><div style="position:absolute;left:1215.92px;top:65.10px;width:4.6px;height:4.6px;border-radius:50%;background:#a0a0a0"></div><div style="position:absolute;left:1255.51px;top:65.10px;width:4.6px;height:4.6px;border-radius:50%;background:#a0a0a0"></div><div style="position:absolute;left:1295.11px;top:65.10px;width:4.6px;height:4.6px;border-radius:50%;background:#a0a0a0"></div><div style="position:absolute;left:1334.70px;top:65.10px;width:4.6px;height:4.6px;border-radius:50%;background:#a0a0a0"></div><div style="position:absolute;left:1354.50px;top:65.10px;width:4.6px;height:4.6px;border-radius:50%;background:#a0a0a0"></div><div style="position:absolute;left:1374.30px;top:65.10px;width:4.6px;height:4.6px;border-radius:50%;background:#a0a0a0"></div><div style="position:absolute;left:1394.09px;top:65.10px;width:4.6px;height:4.6px;border-radius:50%;background:#a0a0a0"></div><div style="position:absolute;left:1413.89px;top:65.10px;width:4.6px;height:4.6px;border-radius:50%;background:#a0a0a0"></div><div style="position:absolute;left:1433.69px;top:65.10px;width:4.6px;height:4.6px;border-radius:50%;background:#a0a0a0"></div><div style="position:absolute;left:1453.48px;top:65.10px;width:4.6px;height:4.6px;border-radius:50%;background:#a0a0a0"></div><div style="position:absolute;left:1473.28px;top:65.10px;width:4.6px;height:4.6px;border-radius:50%;background:#a0a0a0"></div><div style="position:absolute;left:1156.53px;top:109.10px;width:4.6px;height:4.6px;border-radius:50%;background:#a0a0a0"></div><div style="position:absolute;left:1176.33px;top:109.10px;width:4.6px;height:4.6px;border-radius:50%;background:#a0a0a0"></div><div style="position:absolute;left:1215.92px;top:109.10px;width:4.6px;height:4.6px;border-radius:50%;background:#a0a0a0"></div><div style="position:absolute;left:1255.51px;top:109.10px;width:4.6px;height:4.6px;border-radius:50%;background:#a0a0a0"></div><div style="position:absolute;left:1275.31px;top:109.10px;width:4.6px;height:4.6px;border-radius:50%;background:#a0a0a0"></div><div style="position:absolute;left:1334.70px;top:109.10px;width:4.6px;height:4.6px;border-radius:50%;background:#a0a0a0"></div><div style="position:absolute;left:1374.30px;top:109.10px;width:4.6px;height:4.6px;border-radius:50%;background:#000"></div><div style="position:absolute;left:1394.09px;top:109.10px;width:4.6px;height:4.6px;border-radius:50%;background:#000"></div><div style="position:absolute;left:1413.89px;top:109.10px;width:4.6px;height:4.6px;border-radius:50%;background:#000"></div><div style="position:absolute;left:1473.28px;top:109.10px;width:4.6px;height:4.6px;border-radius:50%;background:#000"></div><div style="position:absolute;left:1156.53px;top:153.10px;width:4.6px;height:4.6px;border-radius:50%;background:#000"></div><div style="position:absolute;left:1176.33px;top:153.10px;width:4.6px;height:4.6px;border-radius:50%;background:#000"></div><div style="position:absolute;left:1196.12px;top:153.10px;width:4.6px;height:4.6px;border-radius:50%;background:#fff"></div><div style="position:absolute;left:1215.92px;top:153.10px;width:4.6px;height:4.6px;border-radius:50%;background:#fff"></div><div style="position:absolute;left:1235.72px;top:153.10px;width:4.6px;height:4.6px;border-radius:50%;background:#fff"></div><div style="position:absolute;left:1255.51px;top:153.10px;width:4.6px;height:4.6px;border-radius:50%;background:#fff"></div><div style="position:absolute;left:1275.31px;top:153.10px;width:4.6px;height:4.6px;border-radius:50%;background:#fff"></div><div style="position:absolute;left:1295.11px;top:153.10px;width:4.6px;height:4.6px;border-radius:50%;background:#fff"></div><div style="position:absolute;left:1334.70px;top:153.10px;width:4.6px;height:4.6px;border-radius:50%;background:#000"></div><div style="position:absolute;left:1354.50px;top:153.10px;width:4.6px;height:4.6px;border-radius:50%;background:#000"></div><div style="position:absolute;left:1374.30px;top:153.10px;width:4.6px;height:4.6px;border-radius:50%;background:#000"></div><div style="position:absolute;left:1394.09px;top:153.10px;width:4.6px;height:4.6px;border-radius:50%;background:#000"></div><div style="position:absolute;left:1413.89px;top:153.10px;width:4.6px;height:4.6px;border-radius:50%;background:#000"></div><div style="position:absolute;left:1433.69px;top:153.10px;width:4.6px;height:4.6px;border-radius:50%;background:#000"></div><div style="position:absolute;left:1453.48px;top:153.10px;width:4.6px;height:4.6px;border-radius:50%;background:#000"></div><div style="position:absolute;left:1473.28px;top:153.10px;width:4.6px;height:4.6px;border-radius:50%;background:#000"></div><div style="position:absolute;left:1156.53px;top:197.10px;width:4.6px;height:4.6px;border-radius:50%;background:#000"></div><div style="position:absolute;left:1176.33px;top:197.10px;width:4.6px;height:4.6px;border-radius:50%;background:#000"></div><div style="position:absolute;left:1196.12px;top:197.10px;width:4.6px;height:4.6px;border-radius:50%;background:#000"></div><div style="position:absolute;left:1215.92px;top:197.10px;width:4.6px;height:4.6px;border-radius:50%;background:#000"></div><div style="position:absolute;left:1334.70px;top:197.10px;width:4.6px;height:4.6px;border-radius:50%;background:#000"></div><div style="position:absolute;left:1354.50px;top:197.10px;width:4.6px;height:4.6px;border-radius:50%;background:#000"></div><div style="position:absolute;left:1374.30px;top:197.10px;width:4.6px;height:4.6px;border-radius:50%;background:#000"></div><div style="position:absolute;left:1394.09px;top:197.10px;width:4.6px;height:4.6px;border-radius:50%;background:#000"></div><div style="position:absolute;left:1413.89px;top:197.10px;width:4.6px;height:4.6px;border-radius:50%;background:#000"></div>
</div>
<div style="position:absolute;left:1258px;top:832px;width:119px;height:56px;border:5px solid #e81c24"></div>
<div style="position:absolute;left:1263px;top:837px;width:7px;height:46px;background:#fff"></div>
<div style="position:absolute;left:1263px;top:837px;width:109px;height:3px;background:#fff"></div>
<div style="position:absolute;left:1373px;top:835px;width:129px;height:54px;border:5px solid #e81c24"></div>
<div style="position:absolute;left:1502px;top:842px;width:115px;height:42px;border:4.6px solid #e81c24;border-left-width:2.5px"></div>
<div style="position:absolute;left:1606px;top:847px;width:6px;height:32px;background:#f4f4f4"></div>
<div style="position:absolute;left:1013px;top:1515px;width:1472px;height:33px;background:#f0f0f0"></div>
<div style="position:absolute;left:1048px;top:1528px;width:1168px;height:6px;background:#878787;border-radius:3px"></div>
<div style="position:absolute;left:2px;top:1549px;width:2484px;height:45px;background:#f0f0f0"></div>
<svg style="left:21px;top:1557px" width="30" height="30" viewBox="0 0 30 30"><defs><radialGradient id="led" cx="0.4" cy="0.35" r="0.7"><stop offset="0" stop-color="#d6d8d4"/><stop offset="1" stop-color="#9da09b"/></radialGradient></defs><circle cx="15" cy="14.5" r="13" fill="url(#led)" stroke="#5f625f" stroke-width="2"/></svg>
<svg style="left:68px;top:1557px" width="32" height="30" viewBox="0 0 32 30"><defs><linearGradient id="nb" x1="0" y1="0" x2="1" y2="0"><stop offset="0" stop-color="#4aa7e2"/><stop offset="1" stop-color="#1d8fd8"/></linearGradient></defs><rect x="1.2" y="1.2" width="21" height="27.3" fill="#f5f5ef" stroke="#c9c9c1" stroke-width="1"/><path d="M1.7 1.7 L17.5 1.7 Q19.6 1.7 19.8 3.6 L19.8 7.9 L1.7 7.9 Z" fill="url(#nb)"/><path d="M5.5 7.9 C6.3 5 8.5 3.3 11.2 3 C10.2 4.5 10 6 10.8 7.9 Z" fill="#fff"/><g font-family="Liberation Mono" font-size="5.6" font-weight="bold" fill="#b4b4b0"><text x="2.8" y="14.6">00/</text><text x="2.8" y="20.4">00 .0</text><text x="2.8" y="26">001306</text></g><path d="M9.6 17.4 L24.6 2.4 Q26.2 0.8 27.8 2.4 L28.9 3.5 Q30.5 5.1 28.9 6.7 L13.9 21.7 Z" fill="#555753" stroke="#fff" stroke-width="0.7"/><path d="M9.6 17.4 L13.9 21.7 L7.7 23.3 Z" fill="#000"/><path d="M25.8 4.6 L27 5.8 M26.8 3.6 L28 4.8" stroke="#8a8a86" stroke-width="0.6"/></svg>
<div class="t s23" style="left:128px;top:1563px;">Wireshark Lua text (_ws.lua.text), 6</div>
<div class="t s23 fit" style="left:494px;top:1563px;;--tw:55;">バイト</div>
<div style="position:absolute;left:1650px;top:1556px;width:2px;height:34px;background:#a6a6a6"></div>
<div style="position:absolute;left:1658px;top:1556px;width:2px;height:34px;background:#a6a6a6"></div>
<div class="t s23 fit" style="left:1682px;top:1563px;;--tw:95;">パケット数</div>
<div class="t s23" style="left:1776px;top:1563px;">: 9 · </div>
<div class="t s23 fit" style="left:1819.5px;top:1563px;;--tw:49;">表示</div>
<div class="t s23 fit" style="left:1867.5px;top:1563px;;--tw:122;">: 9 (100.0%)</div>
<div style="position:absolute;left:2216px;top:1556px;width:2px;height:34px;background:#a6a6a6"></div>
<div style="position:absolute;left:2224px;top:1556px;width:2px;height:34px;background:#a6a6a6"></div>
<div class="t s23 fit" style="left:2248px;top:1563px;;--tw:102;">プロファイル</div>
<div class="t s23" style="left:2350px;top:1563px;">: Default</div>
<div style="position:absolute;left:2449px;top:1555px;width:1px;height:36px;background:#dcdcdc"></div>
<div style="position:absolute;left:2474px;top:1571px;width:5px;height:5px;background:#b9b9b9"></div>
<div style="position:absolute;left:2466px;top:1579px;width:5px;height:5px;background:#b9b9b9"></div>
<div style="position:absolute;left:2474px;top:1579px;width:5px;height:5px;background:#b9b9b9"></div>
<div style="position:absolute;left:2458px;top:1587px;width:5px;height:5px;background:#b9b9b9"></div>
<div style="position:absolute;left:2466px;top:1587px;width:5px;height:5px;background:#b9b9b9"></div>
<div style="position:absolute;left:2474px;top:1587px;width:5px;height:5px;background:#b9b9b9"></div><script>
(function(){var els=document.querySelectorAll('.fit');for(var i=0;i<els.length;i++){var e=els[i];var tw=parseFloat(getComputedStyle(e).getPropertyValue('--tw'));var w=e.getBoundingClientRect().width;if(w>0&&tw>0){e.style.transform='scaleX('+(tw/w)+')';}}})();
</script></body></html>
